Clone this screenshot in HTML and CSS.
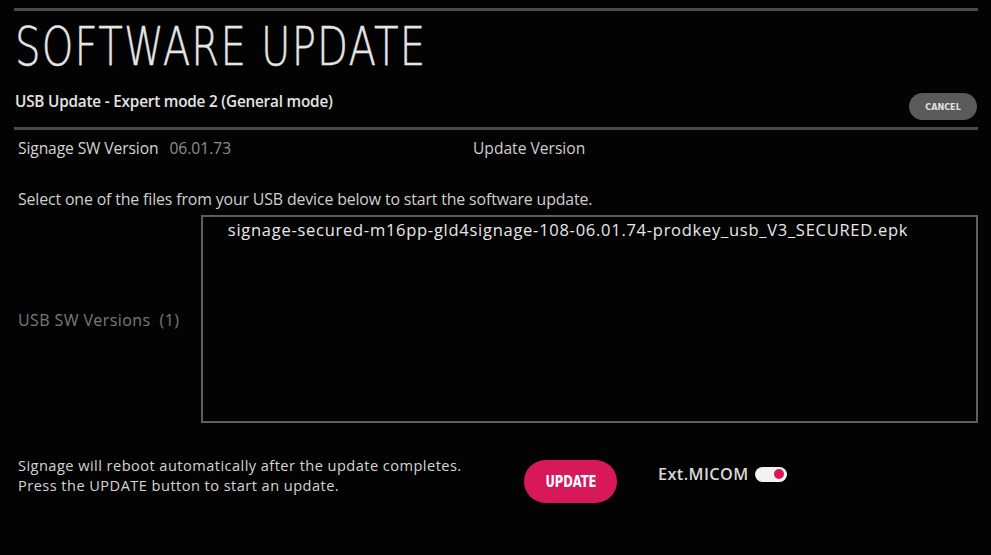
FILE: index.html
```html
<!DOCTYPE html>
<html>
<head>
<meta charset="utf-8">
<link rel="stylesheet" href="styles.css">
</head>
<body>
<div class="screen">
  <div class="rule top"></div>
  <h1 class="title">SOFTWARE UPDATE</h1>
  <div class="subrow">
    <div class="subtitle">USB Update - Expert mode 2 (General mode)</div>
    <button class="cancel">CANCEL</button>
  </div>
  <div class="rule mid"></div>
  <div class="versions">
    <div class="ver-left"><span class="lbl">Signage SW Version</span><span class="val">06.01.73</span></div>
    <div class="ver-right"><span class="lbl">Update Version</span></div>
  </div>
  <div class="instr">Select one of the files from your USB device below to start the software update.</div>
  <div class="filerow">
    <div class="filelabel">USB SW Versions&nbsp; (1)</div>
    <div class="filebox">
      <div class="fileitem">signage-secured-m16pp-gld4signage-108-06.01.74-prodkey_usb_V3_SECURED.epk</div>
    </div>
  </div>
  <div class="bottom">
    <div class="notes">
      <div>Signage will reboot automatically after the update completes.</div>
      <div>Press the UPDATE button to start an update.</div>
    </div>
    <button class="update"><span class="update-label">UPDATE</span></button>
    <div class="micom">
      <span>Ext.MICOM</span>
      <span class="toggle"><span class="knob"></span></span>
    </div>
  </div>
</div>
</body>
</html>
```
FILE: styles.css
```css
* { box-sizing: border-box; }
html, body { margin: 0; padding: 0; background: #030303; }
body { width: 991px; height: 555px; overflow: hidden; font-family: "Open Sans", "DejaVu Sans", sans-serif; color: #d8d8d8; }
.screen { padding: 8px 13px 0 14px; display: flex; flex-direction: column; }
.rule { height: 3px; background: #4a4a4a; }
.title {
  margin: 10px 0 0 1px;
  font-family: "DejaVu Sans", sans-serif;
  font-weight: 200;
  font-size: 53px;
  line-height: 52px;
  letter-spacing: 1.5px;
  color: #e6e6e6;
  height: 52px;
  white-space: nowrap;
  transform: scaleX(0.76);
  transform-origin: left center;
  -webkit-text-stroke: 0.4px #e6e6e6;
}
.subrow { display: flex; justify-content: space-between; align-items: flex-start; margin-top: 18px; height: 36px; }
.subtitle { font-size: 15.3px; font-weight: 600; color: #e4e4e4; margin-left: 1px; letter-spacing: -0.2px; line-height: 20px; }
.cancel {
  margin-top: 2px; margin-right: 1px;
  width: 68px; height: 27px; border-radius: 14px; border: none;
  background: #5a5a5a; color: #e0e0e0;
  font-family: "DejaVu Sans Condensed", sans-serif; font-size: 9px; font-weight: bold;
}
.versions { display: flex; margin-top: 8px; font-size: 15.6px; line-height: 20px; padding-left: 4px; }
.ver-left { width: 455px; }
.ver-left .lbl { color: #d4d4d4; font-weight: 500; letter-spacing: -0.1px; }
.ver-left .val { margin-left: 11px; color: #8f8f8f; }
.ver-right .lbl { color: #cfcfcf; }
.instr { margin-top: 31px; padding-left: 4px; font-size: 15.9px; line-height: 20px; color: #d0d0d0; letter-spacing: -0.15px; }
.filerow { display: flex; margin-top: 6px; }
.filelabel { width: 188px; padding-left: 4px; display: flex; align-items: center; font-size: 16px; letter-spacing: 0.4px; color: #7a7a7a; padding-top: 2px; }
.filebox { width: 782px; height: 208px; border: 2px solid #5e5e5e; padding: 3px 0 0 25px; }
.fileitem { font-size: 16.5px; line-height: 20px; color: #e8e8e8; letter-spacing: 0.73px; white-space: nowrap; }
.bottom { display: flex; align-items: flex-start; margin-top: 32px; }
.notes { width: 510px; padding-left: 4px; font-size: 14.6px; line-height: 20px; color: #d4d4d4; letter-spacing: 0.45px; }
.update {
  width: 93px; height: 43px; border-radius: 22px; border: none; margin-top: 5px;
  background: #d7195a; color: #fff; padding: 0;
  font-family: "DejaVu Sans Condensed", sans-serif; font-weight: bold; font-size: 16px;
}
.update-label { display: inline-block; transform: scaleX(0.8); }
.micom { display: flex; align-items: center; margin-left: 41px; margin-top: 8px; font-size: 16.3px; color: #d8d8d8; font-weight: 600; letter-spacing: 0.4px; }
.toggle { margin-left: 6px; width: 32px; height: 15px; border-radius: 8px; background: #f2f2f2; position: relative; }
.knob { position: absolute; right: 3px; top: 2.5px; width: 10px; height: 10px; border-radius: 50%; background: #d7195a; }
```
